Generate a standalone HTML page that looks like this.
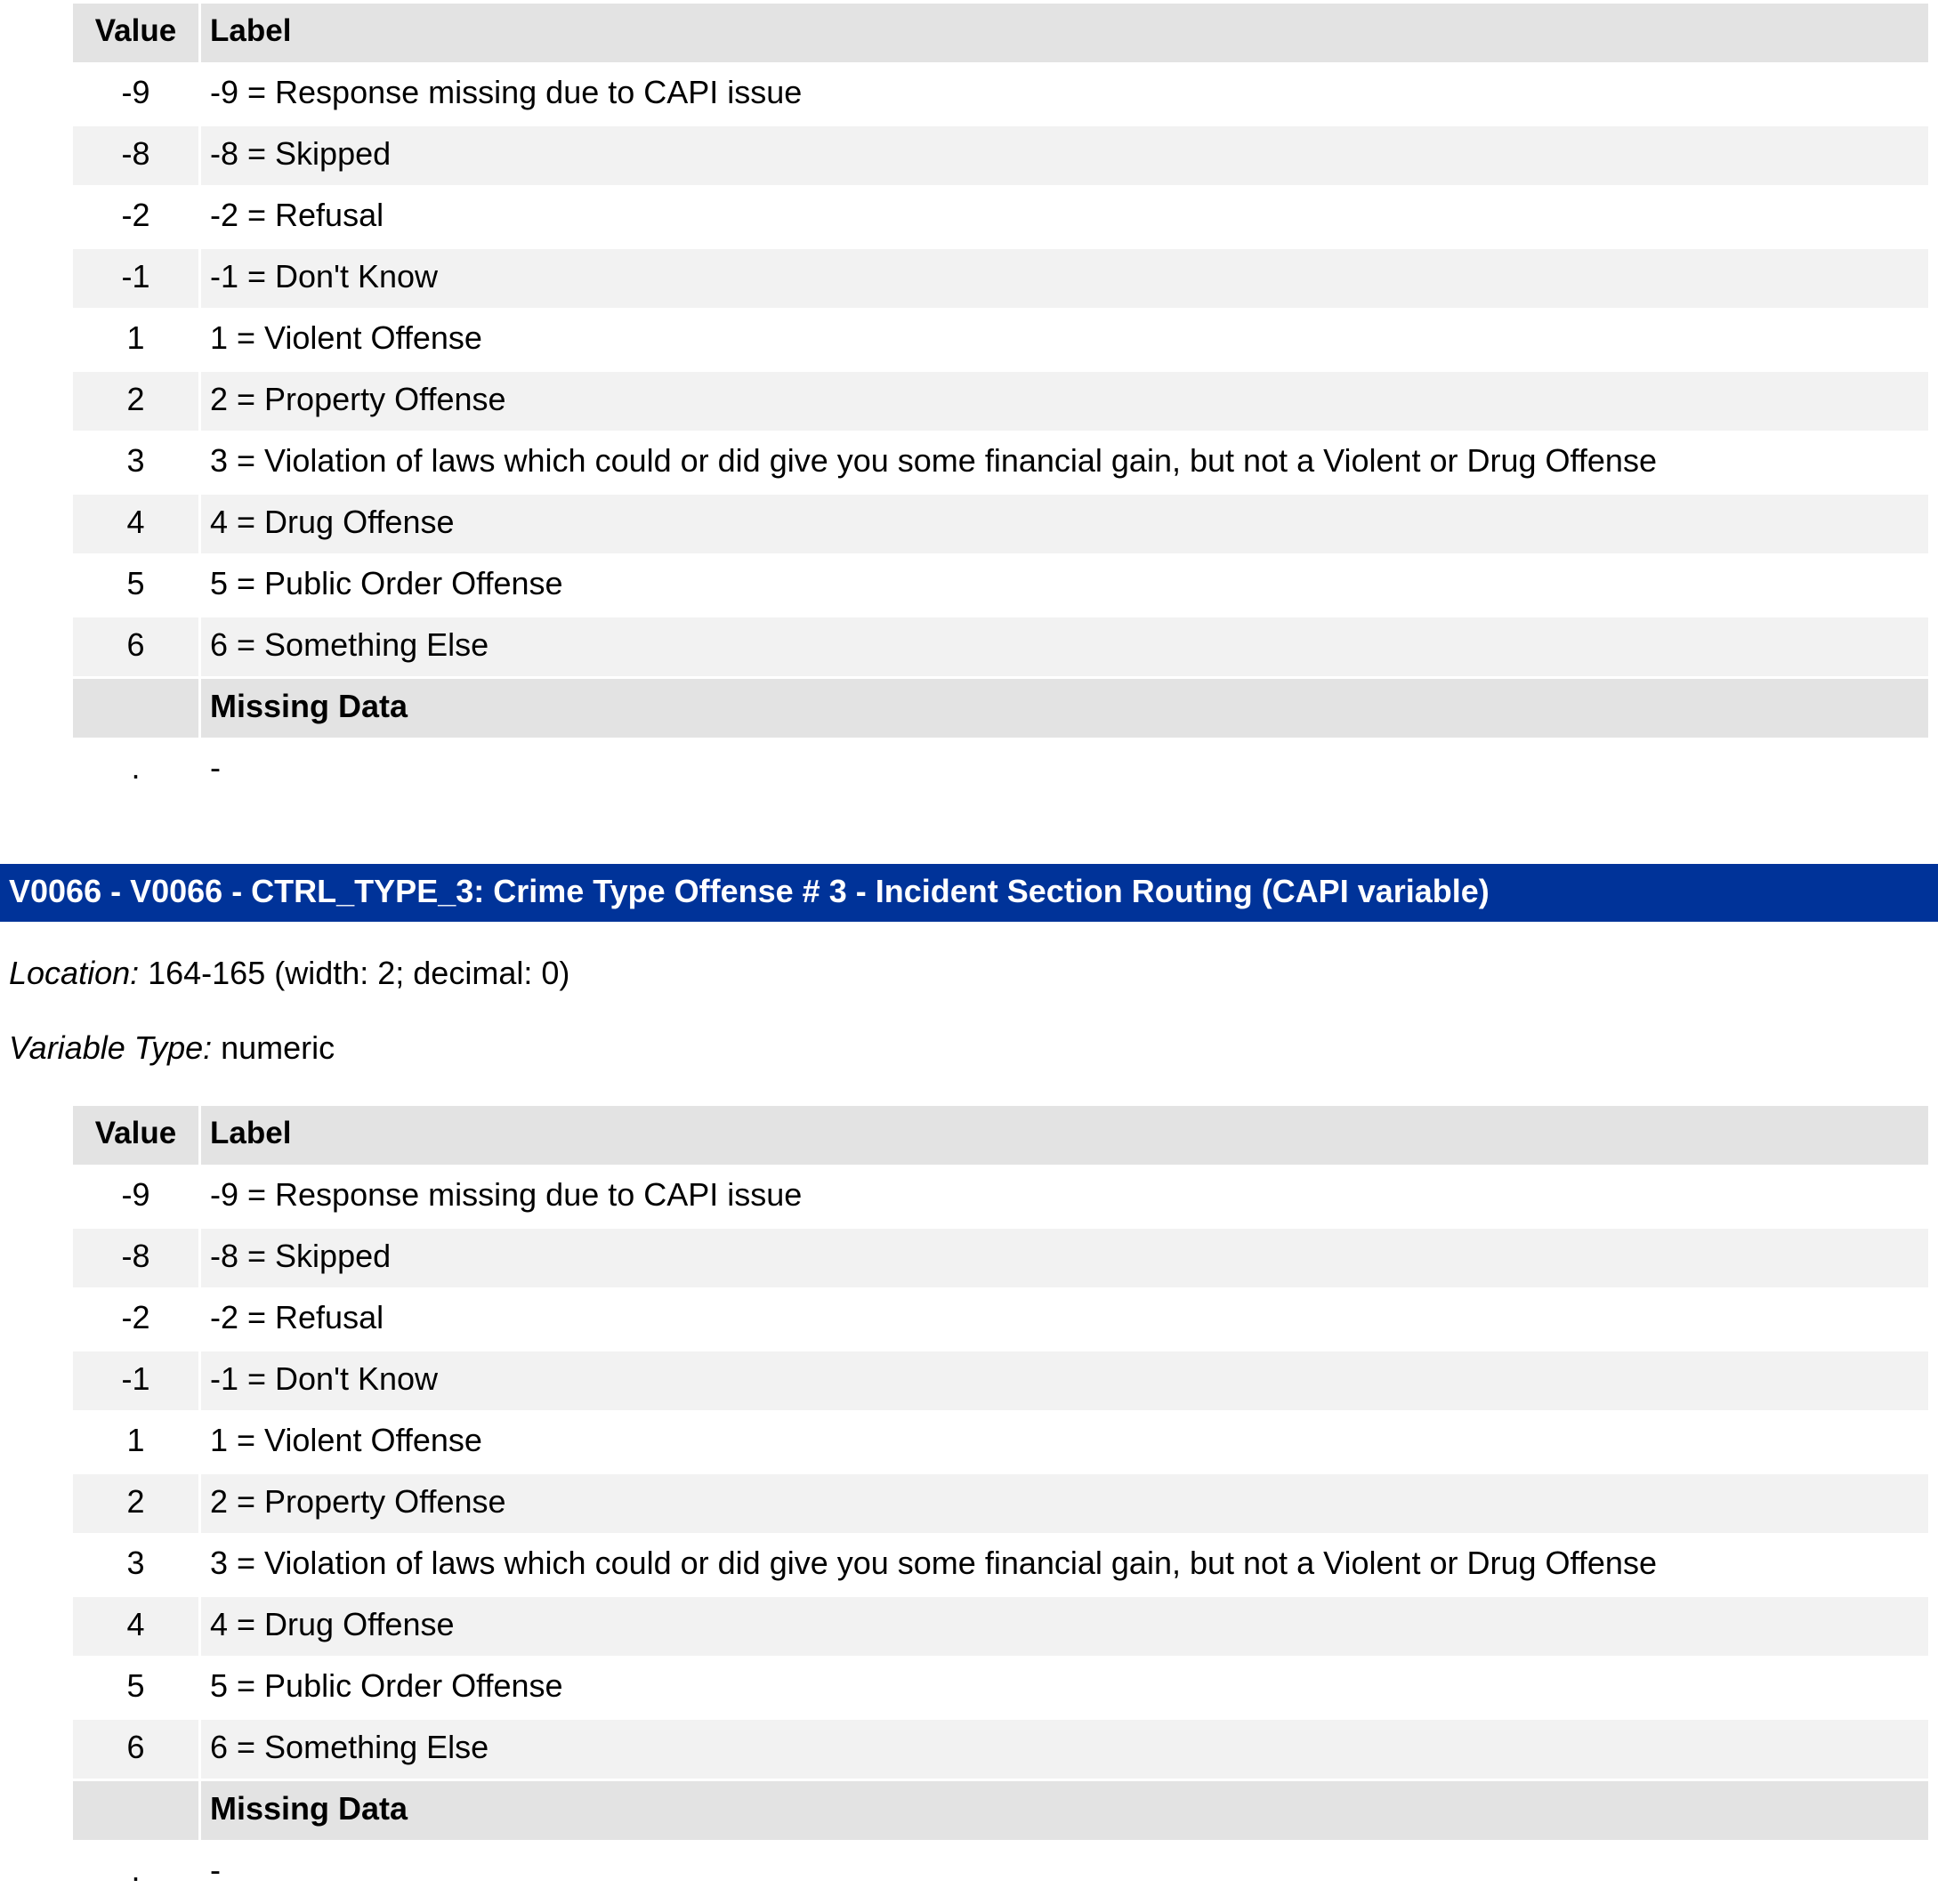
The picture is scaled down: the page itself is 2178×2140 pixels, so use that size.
<!DOCTYPE html>
<html><head><meta charset="utf-8"><style>
*{margin:0;padding:0;box-sizing:border-box}
body{width:2178px;height:2140px;background:#fff;position:relative;overflow:hidden;font-family:"Liberation Sans",Arial,sans-serif;font-size:36px;color:#000}
.r{position:absolute;left:82px;width:2085px;height:66px;line-height:62px}
.v{position:absolute;left:0;width:141px;height:66px;text-align:center}
.l{position:absolute;left:144px;right:0;height:66px;padding-left:10px;white-space:nowrap}
.h .v,.h .l{background:#e3e3e3;font-weight:bold;font-size:35px}
.m .v,.m .l{background:#e3e3e3}
.m .l{font-weight:bold}
.a .v,.a .l{background:#f2f2f2}
.bar{position:absolute;left:0;top:971px;width:2178px;height:65px;background:#003399;color:#fff;font-weight:bold;font-size:36px;line-height:62px;padding-left:10px;white-space:nowrap}
.p{position:absolute;left:10px;white-space:nowrap}
</style></head><body>

<div class="r h" style="top:4px"><div class="v">Value</div><div class="l">Label</div></div>
<div class="r" style="top:73px"><div class="v">-9</div><div class="l">-9 = Response missing due to CAPI issue</div></div>
<div class="r a" style="top:142px"><div class="v">-8</div><div class="l">-8 = Skipped</div></div>
<div class="r" style="top:211px"><div class="v">-2</div><div class="l">-2 = Refusal</div></div>
<div class="r a" style="top:280px"><div class="v">-1</div><div class="l">-1 = Don't Know</div></div>
<div class="r" style="top:349px"><div class="v">1</div><div class="l">1 = Violent Offense</div></div>
<div class="r a" style="top:418px"><div class="v">2</div><div class="l">2 = Property Offense</div></div>
<div class="r" style="top:487px"><div class="v">3</div><div class="l">3 = Violation of laws which could or did give you some financial gain, but not a Violent or Drug Offense</div></div>
<div class="r a" style="top:556px"><div class="v">4</div><div class="l">4 = Drug Offense</div></div>
<div class="r" style="top:625px"><div class="v">5</div><div class="l">5 = Public Order Offense</div></div>
<div class="r a" style="top:694px"><div class="v">6</div><div class="l">6 = Something Else</div></div>
<div class="r m" style="top:763px"><div class="v"></div><div class="l">Missing Data</div></div>
<div class="r" style="top:832px"><div class="v">.</div><div class="l">-</div></div>

<div class="bar">V0066 - V0066 - CTRL_TYPE_3: Crime Type Offense # 3 - Incident Section Routing (CAPI variable)</div>
<div class="p" style="top:1074px;line-height:40px"><i>Location:</i> 164-165 (width: 2; decimal: 0)</div>
<div class="p" style="top:1158px;line-height:40px"><i>Variable Type:</i> numeric</div>

<div class="r h" style="top:1243px"><div class="v">Value</div><div class="l">Label</div></div>
<div class="r" style="top:1312px"><div class="v">-9</div><div class="l">-9 = Response missing due to CAPI issue</div></div>
<div class="r a" style="top:1381px"><div class="v">-8</div><div class="l">-8 = Skipped</div></div>
<div class="r" style="top:1450px"><div class="v">-2</div><div class="l">-2 = Refusal</div></div>
<div class="r a" style="top:1519px"><div class="v">-1</div><div class="l">-1 = Don't Know</div></div>
<div class="r" style="top:1588px"><div class="v">1</div><div class="l">1 = Violent Offense</div></div>
<div class="r a" style="top:1657px"><div class="v">2</div><div class="l">2 = Property Offense</div></div>
<div class="r" style="top:1726px"><div class="v">3</div><div class="l">3 = Violation of laws which could or did give you some financial gain, but not a Violent or Drug Offense</div></div>
<div class="r a" style="top:1795px"><div class="v">4</div><div class="l">4 = Drug Offense</div></div>
<div class="r" style="top:1864px"><div class="v">5</div><div class="l">5 = Public Order Offense</div></div>
<div class="r a" style="top:1933px"><div class="v">6</div><div class="l">6 = Something Else</div></div>
<div class="r m" style="top:2002px"><div class="v"></div><div class="l">Missing Data</div></div>
<div class="r" style="top:2071px"><div class="v">.</div><div class="l">-</div></div>

</body></html>
